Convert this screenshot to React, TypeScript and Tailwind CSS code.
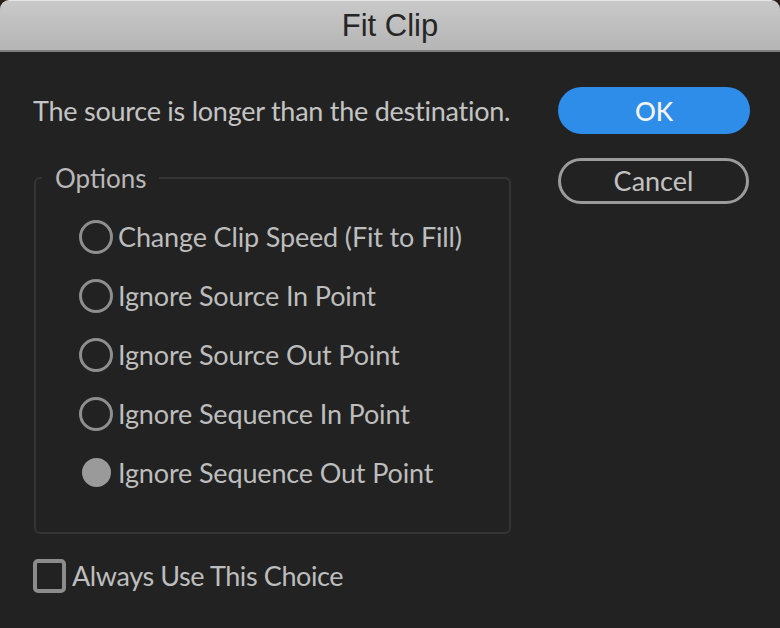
import React from "react";

const font = "font-['Lato','Open_Sans',sans-serif]";

function Radio({ label, checked }: { label: string; checked?: boolean }) {
  return (
    <div className="flex items-center h-[59px]">
      <div className="w-[34px] h-[34px] flex items-center justify-center shrink-0">
        {checked ? (
          <div className="w-[29px] h-[29px] rounded-full bg-[#9a9a9a]" />
        ) : (
          <div className="w-[34px] h-[34px] rounded-full border-[3.5px] border-[#8e8e8e]" />
        )}
      </div>
      <span className="ml-[5px] text-[27px] leading-[32px] tracking-[-0.15px] text-[#bdbdbd] whitespace-nowrap">
        {label}
      </span>
    </div>
  );
}

export default function App() {
  return (
    <div className="w-[780px] h-[628px] bg-[#2a1c16]">
      <div className={`h-full rounded-t-[9px] overflow-hidden bg-[#222222] flex flex-col ${font}`}>
        <div className="h-[52px] shrink-0 flex items-center justify-center bg-gradient-to-b from-[#c9c9c9] to-[#b5b5b5] border-t border-t-[#e6e6e6] border-b-2 border-b-[#7d7d7d]">
          <span className="font-['Liberation_Sans',Arial,sans-serif] text-[31px] leading-[34px] text-[#262626] pt-[1px]">
            Fit Clip
          </span>
        </div>
        <div className="flex pl-[33px] pt-[35px]">
          <div className="w-[478px] flex flex-col">
            <p className="mt-[8px] text-[27px] leading-[32px] tracking-[-0.25px] text-[#c4c4c4] whitespace-nowrap">
              The source is longer than the destination.
            </p>
            <fieldset className="mt-[36px] ml-[1px] w-[477px] border-2 border-[#343434] rounded-[6px] pt-[14px] pb-[30px]">
              <legend className="ml-[6px] px-[13px] text-[26px] leading-[30px] text-[#b8b8b8]">
                Options
              </legend>
              <div className="pl-[43px]">
                <Radio label="Change Clip Speed (Fit to Fill)" />
                <Radio label="Ignore Source In Point" />
                <Radio label="Ignore Source Out Point" />
                <Radio label="Ignore Sequence In Point" />
                <Radio label="Ignore Sequence Out Point" checked />
              </div>
            </fieldset>
          </div>
          <div className="ml-[47px] flex flex-col gap-[24px]">
            <button className="w-[192px] h-[47px] rounded-full bg-[#2d8de9] text-[#f4f4f4] text-[26px] leading-[30px] font-medium">
              OK
            </button>
            <button className="w-[191px] h-[46px] rounded-full border-[3px] border-[#9b9b9b] text-[#c2c2c2] text-[27px] leading-[30px]">
              Cancel
            </button>
          </div>
        </div>
        <div className="flex items-center pl-[33px] mt-[25px]">
          <div className="w-[33px] h-[34px] rounded-[5px] border-4 border-[#8c8c8c]" />
          <span className="ml-[6px] text-[27px] leading-[32px] tracking-[-0.4px] text-[#bdbdbd]">
            Always Use This Choice
          </span>
        </div>
      </div>
    </div>
  );
}
